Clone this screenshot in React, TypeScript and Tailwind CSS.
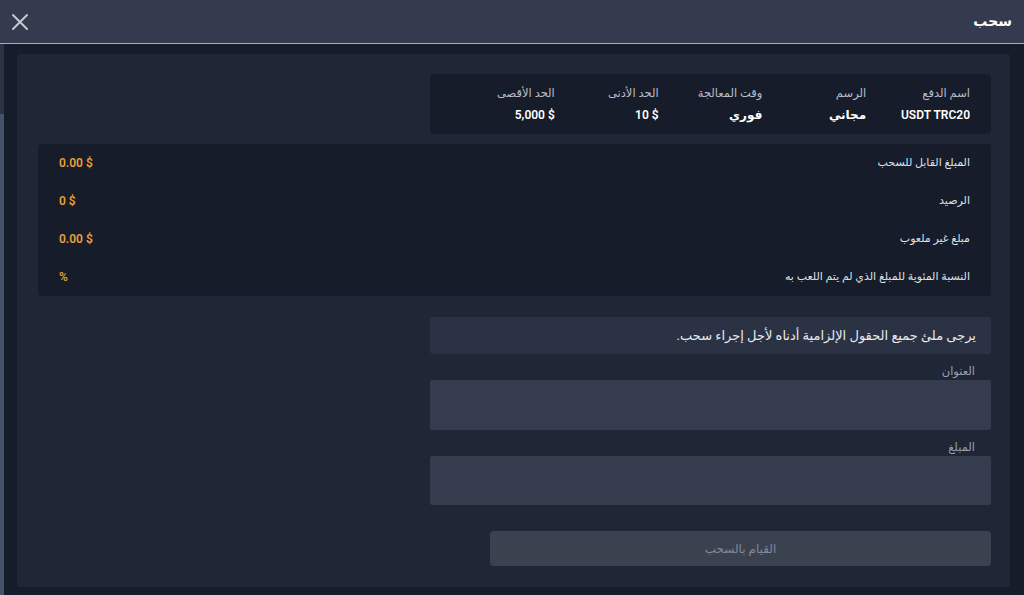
import React from "react";

const info = [
  { label: "اسم الدفع", value: "USDT TRC20" },
  { label: "الرسم", value: "مجاني" },
  { label: "وقت المعالجة", value: "فوري" },
  { label: "الحد الأدنى", value: "10 $" },
  { label: "الحد الأقصى", value: "5,000 $" },
];

const stats = [
  { label: "المبلغ القابل للسحب", value: "0.00 $" },
  { label: "الرصيد", value: "0 $" },
  { label: "مبلغ غير ملعوب", value: "0.00 $" },
  { label: "النسبة المئوية للمبلغ الذي لم يتم اللعب به", value: "%" },
];

export default function App() {
  return (
    <div
      dir="rtl"
      className="w-[1024px] h-[595px] overflow-hidden bg-[#161d2a] flex flex-col"
      style={{ fontFamily: "Roboto, 'DejaVu Sans', sans-serif" }}
    >
      {/* header */}
      <div className="h-[44px] shrink-0 bg-[#343b4e] border-b border-[#a3acbd] flex items-center justify-between pr-[12px] pl-[11px]">
        <div className="text-white text-[14px] font-bold">سحب</div>
        <svg width="18" height="18" viewBox="0 0 18 18" className="text-[#c3c8d1]">
          <path d="M2 2 L16 16 M16 2 L2 16" stroke="currentColor" strokeWidth="2" strokeLinecap="round" />
        </svg>
      </div>

      <div className="flex-1 flex flex-row-reverse min-h-0">
        {/* left strip */}
        <div className="w-[4px] flex flex-col shrink-0">
          <div className="h-[70px] bg-[#2b3243]" />
          <div className="flex-1 bg-[#46526a]" />
        </div>
        <div className="flex-1 pt-[10px] pb-[8px] pl-[13px] pr-[14px]">
          <div className="h-full bg-[#1f2635] rounded-[3px] pl-[21px] pr-[19px] pt-[20px] pb-[20px] flex flex-col">
            {/* info card */}
            <div className="w-[561px] h-[60px] bg-[#161c29] rounded-[4px] px-[21px] pt-[10px] grid grid-cols-5">
              {info.map((c) => (
                <div key={c.label} className="flex flex-col items-start">
                  <div className="text-[11.5px] text-[#b9bdc6] leading-[18px]">{c.label}</div>
                  <div dir="ltr" className="text-[12px] text-white font-semibold leading-[26px]">{c.value}</div>
                </div>
              ))}
            </div>

            {/* stats card */}
            <div className="mt-[10px] bg-[#161c29] rounded-[4px] px-[21px]">
              {stats.map((s) => (
                <div key={s.label} className="h-[38px] flex items-center justify-between">
                  <div className="text-[11px] text-[#dfe2e7]">{s.label}</div>
                  <div dir="ltr" className="text-[12px] text-[#e6a03c] font-semibold">{s.value}</div>
                </div>
              ))}
            </div>

            {/* form */}
            <div className="w-[561px] mt-[21px] flex flex-col">
              <div className="h-[37px] bg-[#2a3243] rounded-[3px] pr-[15px] flex items-center text-[13px] text-[#e8eaee]">
                يرجى ملئ جميع الحقول الإلزامية أدناه لأجل إجراء سحب.
              </div>
              <div className="mt-[9px] pr-[16px] text-[11.5px] text-[#98a1b4] leading-[17px]">العنوان</div>
              <div className="h-[50px] bg-[#343c4d] rounded-[2px]" />
              <div className="mt-[9px] pr-[16px] text-[11.5px] text-[#98a1b4] leading-[17px]">المبلغ</div>
              <div className="h-[49px] bg-[#343c4d] rounded-[2px]" />
              <button className="mt-[26px] w-[501px] h-[35px] bg-[#3a4250] rounded-[4px] text-[12px] text-[#80889a]">
                القيام بالسحب
              </button>
            </div>
          </div>
        </div>
      </div>
    </div>
  );
}
